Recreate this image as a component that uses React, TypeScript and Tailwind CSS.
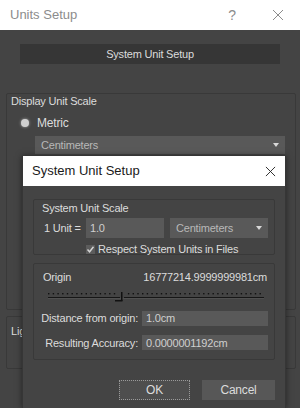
import React from "react";

const font = { fontFamily: '"Liberation Sans", Arial, sans-serif' };

function CloseIcon({ className }: { className?: string }) {
  return (
    <svg viewBox="0 0 12 12" className={className} fill="none" stroke="currentColor" strokeWidth="1">
      <path d="M1 1L11 11M11 1L1 11" />
    </svg>
  );
}

function Caret() {
  return (
    <svg viewBox="0 0 6 4" className="w-[6px] h-[4px]" fill="#d8d8d8">
      <path d="M0 0H6L3 4Z" />
    </svg>
  );
}

function Slider() {
  const dots = [];
  for (let x = 0; x <= 216; x += 4.7) {
    if (x > 68 && x < 76) continue;
    dots.push(<rect key={x} x={x} y={1} width={1.4} height={1.4} fill="#111" />);
  }
  return (
    <svg width="218" height="12" viewBox="0 0 218 12" className="block">
      {dots}
      <rect x="0" y="5" width="72" height="1" fill="#161616" />
      <rect x="76" y="5" width="140" height="1" fill="#161616" />
      <rect x="0" y="6" width="216" height="1" fill="#505050" />
      <rect x="73" y="0" width="1.5" height="9" fill="#111" />
      <rect x="67" y="8" width="7.5" height="1.5" fill="#111" />
    </svg>
  );
}

export default function App() {
  return (
    <div
      className="relative w-[300px] h-[408px] overflow-hidden bg-[#444444] text-[11px] tracking-[-0.2px] text-[#dcdcdc]"
      style={font}
    >
      {/* outer dialog */}
      <div className="h-[30px] bg-white flex items-center pl-[10px] tracking-normal">
        <span className="text-[13px] text-[#8c8c8c]">Units Setup</span>
        <span className="ml-auto text-[14px] text-[#8c8c8c] mr-[36px]">?</span>
        <CloseIcon className="w-[12px] h-[12px] text-[#8c8c8c] mr-[16px]" />
      </div>
      <div className="px-[20px] pt-[14px]">
        <div className="h-[20px] bg-[#363636] flex items-center justify-center">
          System Unit Setup
        </div>
      </div>
      <div className="mt-[29px] ml-[6px] mr-[4px] h-[217px] border border-[#393939] rounded-[2px]">
        <div className="pl-[4px] leading-[14px]">Display Unit Scale</div>
        <div className="flex items-center mt-[8px] pl-[14px] leading-[14px]">
          <span className="w-[8px] h-[8px] rounded-full bg-[#d0d0d0] shadow-[0_0_3px_#aaa]" />
          <span className="ml-[8px] text-[12px]">Metric</span>
        </div>
        <div className="mt-[6px] ml-[28px] mr-[10px] h-[18px] bg-[#595959] flex items-center pl-[6px] pr-[6px] text-[#b8b8b8]">
          Centimeters
          <span className="ml-auto">
            <Caret />
          </span>
        </div>
      </div>
      <div className="mt-[6px] ml-[6px] mr-[4px] h-[53px] border border-[#393939] rounded-[2px]">
        <div className="pl-[4px] pt-[6px]">Lighting Units</div>
      </div>

      {/* inner dialog */}
      <div className="absolute left-[22px] top-[156px] w-[264px] bottom-0 flex flex-col bg-[#444444] border-x border-[#363636] shadow-[0_0_6px_rgba(0,0,0,0.5)]">
        <div className="h-[30px] shrink-0 bg-white flex items-center pl-[9px] pr-[9px] tracking-normal">
          <span className="text-[13px] text-[#1a1a1a]">System Unit Setup</span>
          <CloseIcon className="ml-auto w-[11px] h-[11px] text-[#222]" />
        </div>
        <div className="pl-[10px] pr-[10px] pt-[13px]">
          <div className="h-[56px] border border-[#393939] rounded-[2px]">
            <div className="pl-[8px] leading-[14px] pt-[1px]">System Unit Scale</div>
            <div className="flex items-center mt-[3px] pl-[10px]">
              <span className="w-[38px]">1 Unit =</span>
              <div className="ml-[4px] w-[78px] h-[20px] bg-[#595959] flex items-center pl-[4px] text-[#cfcfcf]">
                1.0
              </div>
              <div className="ml-[6px] w-[98px] h-[20px] bg-[#595959] flex items-center pl-[6px] pr-[6px] text-[#b8b8b8]">
                Centimeters
                <span className="ml-auto">
                  <Caret />
                </span>
              </div>
            </div>
            <div className="flex items-center mt-[3px] pl-[52px]">
              <span className="w-[9px] h-[9px] bg-[#5c5c5c] flex items-center justify-center">
                <svg viewBox="0 0 9 9" className="w-[9px] h-[9px]" fill="none" stroke="#d6d6d6" strokeWidth="1.4">
                  <path d="M1.5 4.5L3.6 6.8L7.5 1.8" />
                </svg>
              </span>
              <span className="ml-[3px]">Respect System Units in Files</span>
            </div>
          </div>
          <div className="mt-[8px] h-[97px] border border-[#393939] rounded-[2px]">
            <div className="flex items-center pl-[9px] pr-[7px] pt-[6px] leading-[14px]">
              <span>Origin</span>
              <span className="ml-auto">16777214.9999999981cm</span>
            </div>
            <div className="mt-[8px] pl-[14px]">
              <Slider />
            </div>
            <div className="flex items-center mt-[6px]">
              <span className="w-[104px] text-right">Distance from origin:</span>
              <div className="ml-[4px] w-[126px] h-[15px] bg-[#595959] flex items-center pl-[4px] text-[#cfcfcf]">
                1.0cm
              </div>
            </div>
            <div className="flex items-center mt-[8px]">
              <span className="w-[104px] text-right">Resulting Accuracy:</span>
              <div className="ml-[4px] w-[126px] h-[15px] bg-[#595959] flex items-center pl-[4px] text-[#cfcfcf]">
                0.0000001192cm
              </div>
            </div>
          </div>
          <div className="mt-[20px] flex justify-end gap-[12px]">
            <div className="w-[71px] h-[20px] bg-[#4e4e4e] border border-dotted border-[#9a9a9a] flex items-center justify-center text-[12px]">
              OK
            </div>
            <div className="w-[73px] h-[20px] bg-[#575757] flex items-center justify-center text-[12px]">
              Cancel
            </div>
          </div>
        </div>
      </div>
    </div>
  );
}
